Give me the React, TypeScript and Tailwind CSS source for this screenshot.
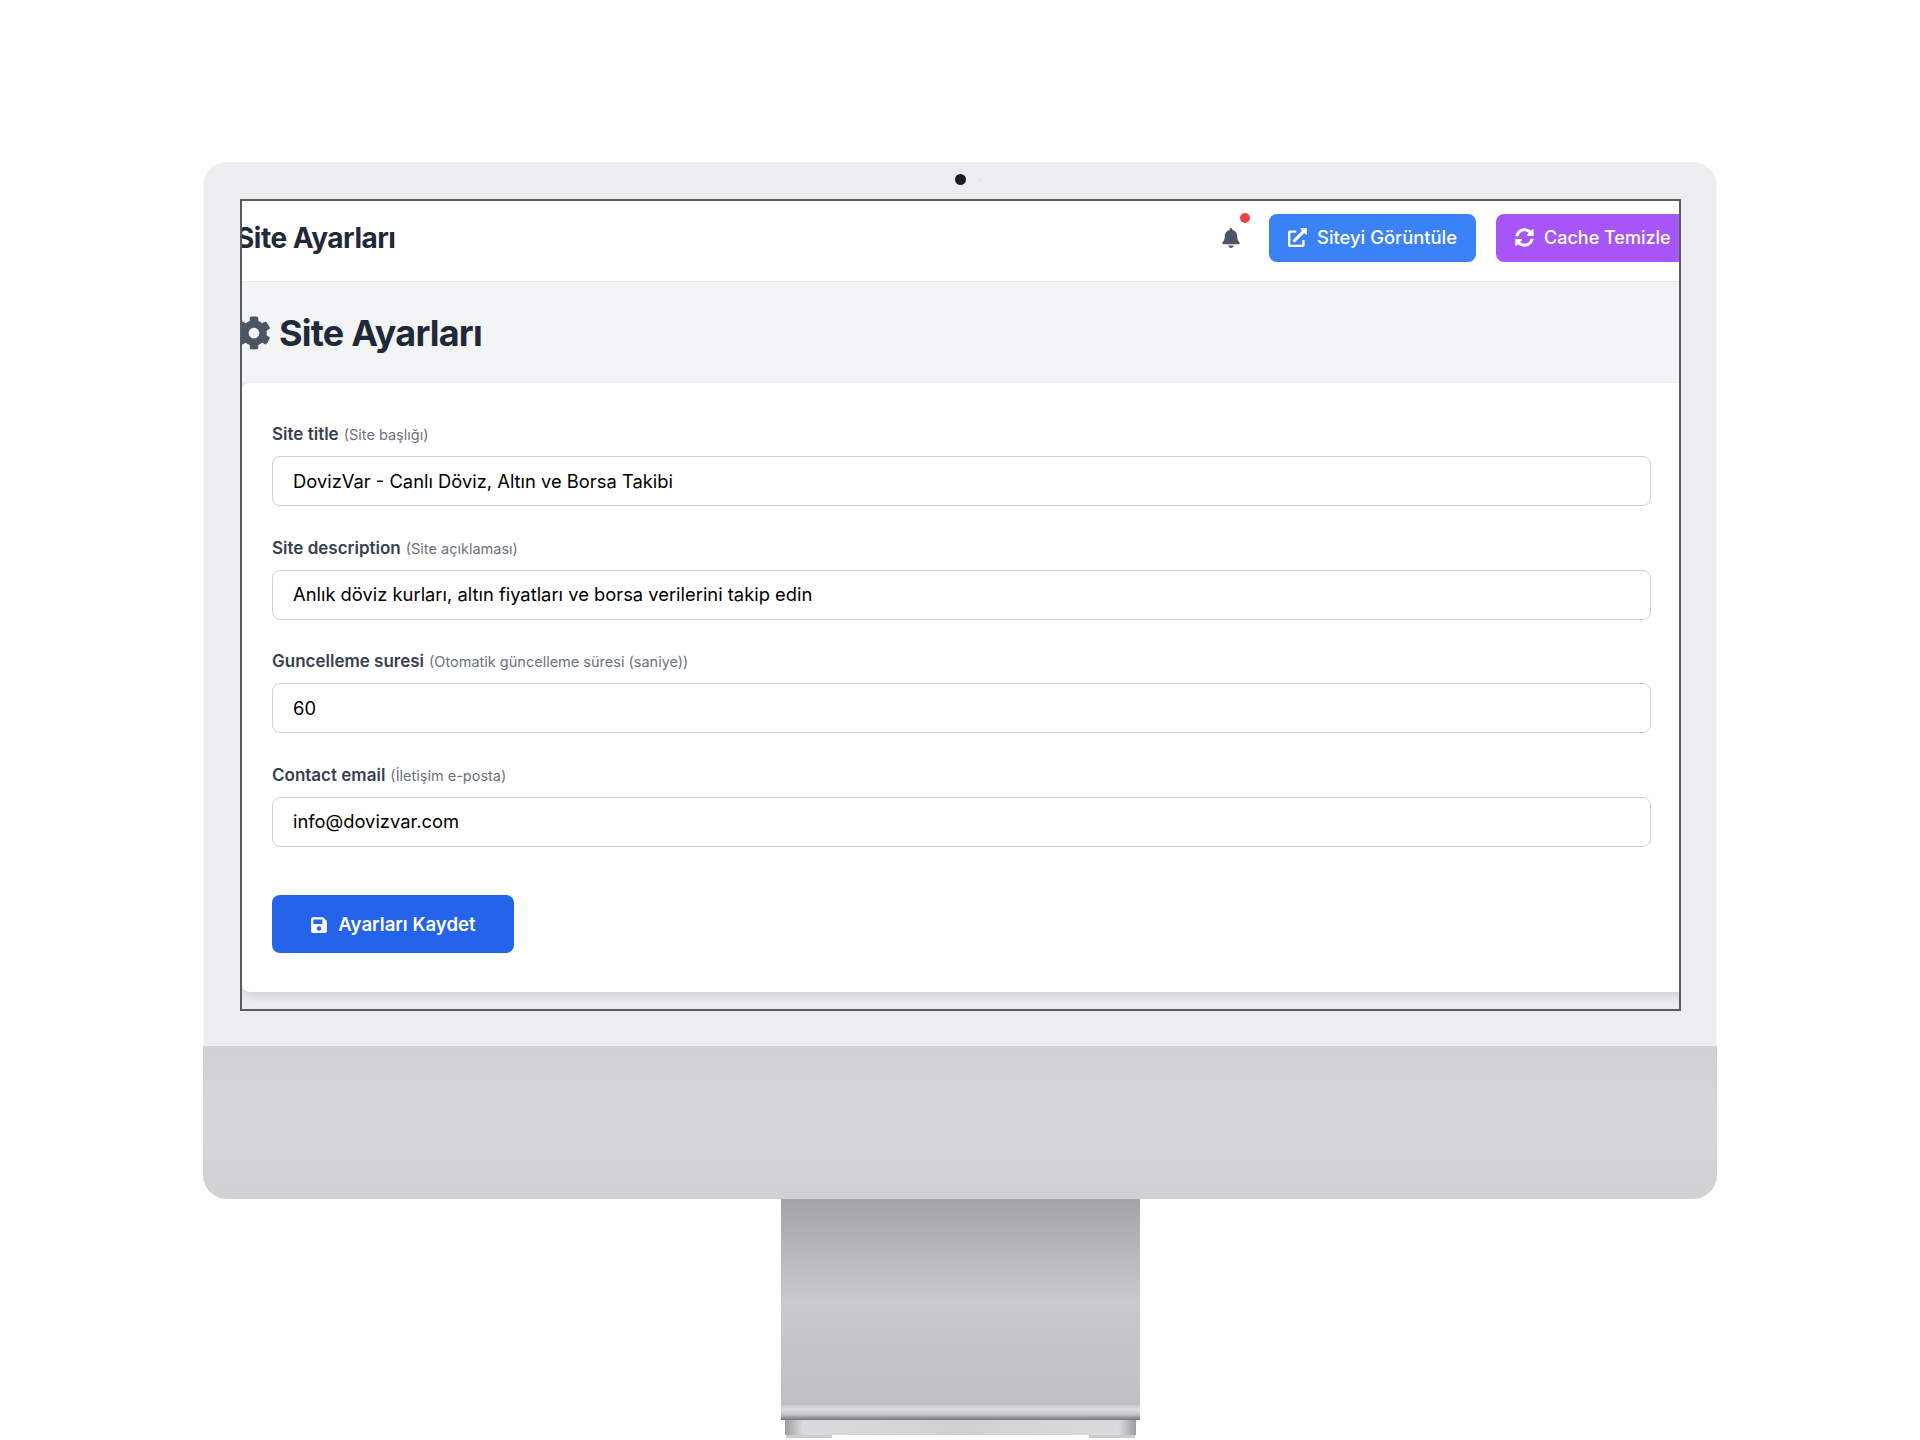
import { FaBell, FaCog, FaExternalLinkAlt, FaSave, FaSyncAlt } from "react-icons/fa";

const fields = [
  { label: "Site title", hint: "(Site başlığı)", value: "DovizVar - Canlı Döviz, Altın ve Borsa Takibi" },
  { label: "Site description", hint: "(Site açıklaması)", value: "Anlık döviz kurları, altın fiyatları ve borsa verilerini takip edin" },
  { label: "Guncelleme suresi", hint: "(Otomatik güncelleme süresi (saniye))", value: "60" },
  { label: "Contact email", hint: "(İletişim e-posta)", value: "info@dovizvar.com" },
];

export default function App() {
  return (
    <div className="h-[1440px] w-[1920px] overflow-hidden bg-white pt-[162px] font-['Inter',sans-serif]">
      <div className="mx-auto w-[1514px]">
        <div className="relative rounded-t-[24px] bg-[#ecedef] pb-[35px] pl-[37px] pr-[36px] pt-[37px] shadow-[inset_0_0_0_1px_#f1f2f4]">
          <div className="absolute left-[751.5px] top-[12px] h-[11px] w-[11px] rounded-full bg-[#1d1d1f]" />
          <div className="absolute left-[775px] top-[16px] h-[3px] w-[3px] rounded-full bg-[#e2e3e5]" />
          <div className="h-[812px] overflow-hidden border-2 border-[#5a5c5e] bg-[#ecedef]">
            <div className="bg-[#f3f4f6]">
              <div className="-ml-[6px] w-[1470px]">
                <header className="flex h-[81px] items-center justify-between border-b border-[#e5e7eb] bg-white pb-[7px] pr-[3px]">
                  <h1 className="text-[28px] font-bold leading-none tracking-[-0.5px] text-[#1f2937]">Site Ayarları</h1>
                  <div className="flex items-center gap-[20px]">
                    <div className="relative mr-[8px] text-[#4b5563]">
                      <FaBell className="h-[20px] w-[20px]" />
                      <span className="absolute -right-[9px] -top-[15px] h-[10px] w-[10px] rounded-full bg-[#ef4444]" />
                    </div>
                    <button className="flex h-[48px] w-[207px] items-center gap-[10px] rounded-lg bg-[#3b82f6] pl-[19px] text-[18.4px] font-medium text-white">
                      <FaExternalLinkAlt className="h-[19px] w-[19px]" />
                      Siteyi Görüntüle
                    </button>
                    <button className="flex h-[48px] w-[207px] items-center gap-[10px] rounded-lg bg-[#a855f7] pl-[19px] text-[18px] font-medium text-white">
                      <FaSyncAlt className="h-[19px] w-[19px]" />
                      Cache Temizle
                    </button>
                  </div>
                </header>
                <div className="flex h-[101px] items-center gap-[8px] pl-[1px] text-[#1f2937]">
                  <FaCog className="h-[34px] w-[34px] text-[#4b5563]" />
                  <h2 className="text-[36px] font-bold leading-none tracking-[-0.8px]">Site Ayarları</h2>
                </div>
              </div>
            </div>
            <main className="-mr-[10px] rounded-lg bg-white pb-[39px] pl-[30px] pr-[38px] pt-[39px] shadow-[0_4px_10px_rgba(0,0,0,0.12)]">
              <div className="flex flex-col gap-[29.5px]">
                {fields.map((f) => (
                  <div key={f.label}>
                    <div className="mb-[13px] flex h-[21px] items-baseline gap-[5px] leading-[25px] text-[#374151]">
                      <span className="text-[17px] font-semibold">{f.label}</span>
                      <span className="text-[14.5px] text-[#6b7280]">{f.hint}</span>
                    </div>
                    <div className="flex h-[50px] items-center rounded-lg border border-[#cdd1d8] px-[20px] pt-[1px] text-[18.35px] text-black">
                      {f.value}
                    </div>
                  </div>
                ))}
              </div>
              <button className="mt-[48.5px] flex h-[58px] w-[242px] items-center justify-center gap-[10px] rounded-lg bg-[#2563eb] pt-[1px] text-[18.6px] font-semibold text-white">
                <FaSave className="h-[18px] w-[18px]" />
                Ayarları Kaydet
              </button>
            </main>
          </div>
        </div>
        <div className="h-[153px] rounded-b-[24px] bg-gradient-to-b from-[#d0d1d3] via-[#d5d6d8] to-[#d0d1d3]" />
      </div>
      <div className="mx-auto w-[359px]">
        <div className="h-[206px] bg-gradient-to-b from-[#a2a3a5] via-[#c9cacc] to-[#bfc0c2]" />
        <div className="h-[15px] bg-[linear-gradient(180deg,#c8c9cb_0%,#dcdddf_30%,#c0c1c3_65%,#747577_100%)]" />
        <div className="mx-[4px] flex h-[15px] items-end justify-between bg-[linear-gradient(90deg,#9c9d9f_0%,#dadbdd_5%,#d0d1d3_50%,#dadbdd_95%,#9c9d9f_100%)]" />
        <div className="mx-[5px] flex h-[3px] justify-between">
          <div className="h-[3px] w-[46px] bg-[#cbcccd]" />
          <div className="h-[3px] w-[46px] bg-[#cbcccd]" />
        </div>
      </div>
    </div>
  );
}
